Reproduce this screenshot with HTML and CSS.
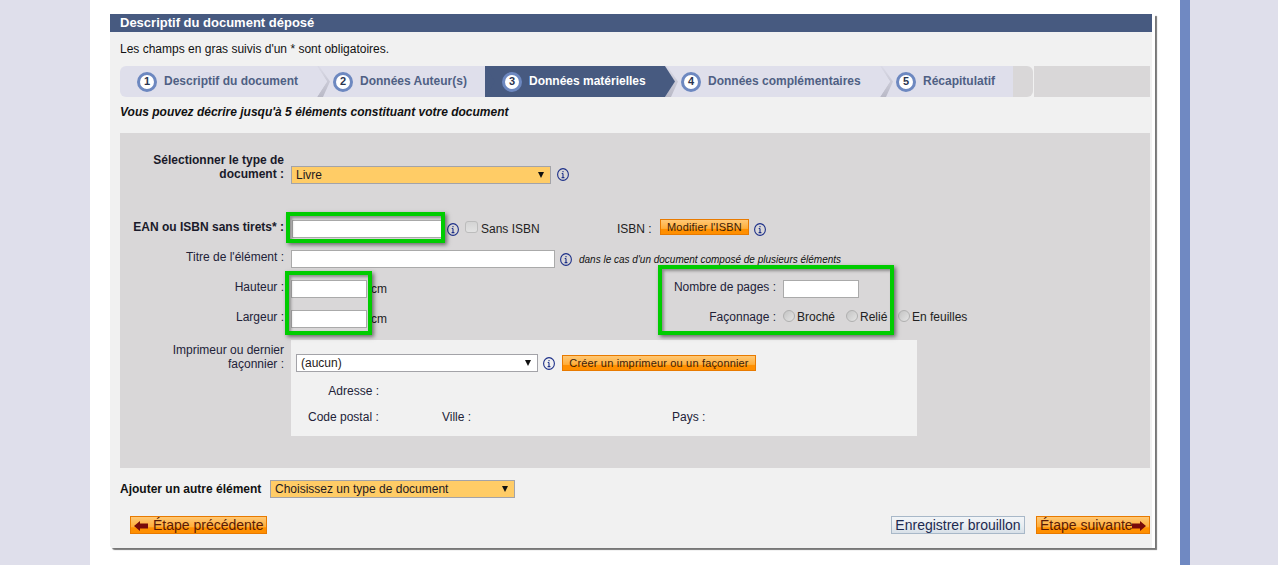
FILE: index.html
```html
<!DOCTYPE html>
<html lang="fr">
<head>
<meta charset="utf-8">
<title>Descriptif du document déposé</title>
<link rel="stylesheet" href="styles.css">
</head>
<body>
<div class="page">
  <div class="side-left"></div>
  <main class="main">
    <div class="card">
      <div class="inner">
        <h1 class="title">Descriptif du document déposé</h1>
        <p class="intro">Les champs en gras suivis d'un * sont obligatoires.</p>
        <div class="steps">
          <div class="step s1"><span class="num">1</span><span>Descriptif du document</span>
            <svg class="chev" width="14" height="31" viewBox="0 0 14 31"><defs><linearGradient id="shade" x1="0" y1="0" x2="0" y2="1"><stop offset="0" stop-color="#dbdbe7"/><stop offset="1" stop-color="#b9b9c6"/></linearGradient></defs><polygon fill="url(#shade)" points="0,31 10,15.5 0,0 2,0 13,15.5 6,31"/><polygon class="light" points="0,0 10,15.5 0,31"/></svg></div>
          <div class="step s2"><span class="num">2</span><span>Données Auteur(s)</span></div>
          <div class="step s3 active"><span class="num">3</span><span>Données matérielles</span>
            <svg class="chev" width="14" height="31" viewBox="0 0 14 31"><polygon fill="url(#shade)" points="0,31 10,15.5 0,0 2,0 13,15.5 6,31"/><polygon class="dark" points="0,0 10,15.5 0,31"/></svg></div>
          <div class="step s4"><span class="num">4</span><span>Données complémentaires</span>
            <svg class="chev" width="14" height="31" viewBox="0 0 14 31"><polygon fill="url(#shade)" points="0,31 10,15.5 0,0 2,0 13,15.5 6,31"/><polygon class="light" points="0,0 10,15.5 0,31"/></svg></div>
          <div class="step s5"><span class="num">5</span><span>Récapitulatif</span></div>
          <div class="cap"></div>
          <div class="rest"></div>
        </div>
        <p class="lead">Vous pouvez décrire jusqu'à 5 éléments constituant votre document</p>

        <div class="form">
          <div class="row r-type">
            <label class="lbl bold lbl-top">Sélectionner le type de document :</label>
            <span class="sel sel-type"><select class="orange"><option>Livre</option></select></span>
            <svg class="info" width="12" height="13" viewBox="0 0 12 13"><ellipse cx="6" cy="6.5" rx="5.4" ry="5.9"/><path d="M6 5.5v4M4.6 9.6h2.8M4.7 5.5H6M6 3v1.2"/></svg>
          </div>

          <div class="row r-ean">
            <label class="lbl bold">EAN ou ISBN sans tirets* :</label>
            <input class="txt w-ean" type="text">
            <svg class="info" width="12" height="13" viewBox="0 0 12 13"><ellipse cx="6" cy="6.5" rx="5.4" ry="5.9"/><path d="M6 5.5v4M4.6 9.6h2.8M4.7 5.5H6M6 3v1.2"/></svg>
            <input class="check" type="checkbox">
            <span class="sans">Sans ISBN</span>
            <span class="isbn">ISBN :</span>
            <button class="btn btn-small btn-isbn" type="button">Modifier l'ISBN</button>
            <svg class="info" width="12" height="13" viewBox="0 0 12 13"><ellipse cx="6" cy="6.5" rx="5.4" ry="5.9"/><path d="M6 5.5v4M4.6 9.6h2.8M4.7 5.5H6M6 3v1.2"/></svg>
          </div>

          <div class="row r-std">
            <label class="lbl">Titre de l'élément :</label>
            <input class="txt w-title" type="text">
            <svg class="info" width="12" height="13" viewBox="0 0 12 13"><ellipse cx="6" cy="6.5" rx="5.4" ry="5.9"/><path d="M6 5.5v4M4.6 9.6h2.8M4.7 5.5H6M6 3v1.2"/></svg>
            <em class="hint">dans le cas d'un document composé de plusieurs éléments</em>
          </div>

          <div class="row r-std">
            <label class="lbl">Hauteur :</label>
            <input class="txt w-dim" type="text">
            <span class="cm">cm</span>
            <label class="lbl lbl-right">Nombre de pages :</label>
            <input class="txt w-dim" type="text">
          </div>

          <div class="row r-std">
            <label class="lbl">Largeur :</label>
            <input class="txt w-dim" type="text">
            <span class="cm">cm</span>
            <label class="lbl lbl-right">Façonnage :</label>
            <span class="radios">
              <span class="radio-item r1"><input class="radio" type="radio" name="f">Broché</span>
              <span class="radio-item r2"><input class="radio" type="radio" name="f">Relié</span>
              <span class="radio-item"><input class="radio" type="radio" name="f">En feuilles</span>
            </span>
          </div>

          <div class="row r-print">
            <label class="lbl lbl-print">Imprimeur ou dernier façonnier :</label>
            <div class="printer">
              <div class="print-top">
                <span class="sel sel-print"><select class="white"><option>(aucun)</option></select></span>
                <svg class="info" width="12" height="13" viewBox="0 0 12 13"><ellipse cx="6" cy="6.5" rx="5.4" ry="5.9"/><path d="M6 5.5v4M4.6 9.6h2.8M4.7 5.5H6M6 3v1.2"/></svg>
                <button class="btn btn-small btn-create" type="button">Créer un imprimeur ou un façonnier</button>
              </div>
              <div class="addr">Adresse :</div>
              <div class="addr-row">
                <span class="cp">Code postal :</span>
                <span class="ville">Ville :</span>
                <span class="pays">Pays :</span>
              </div>
            </div>
          </div>

          <div class="mark mark-ean"></div>
          <div class="mark mark-dim"></div>
          <div class="mark mark-pages"></div>
        </div>

        <div class="add">
          <span class="add-lbl">Ajouter un autre élément</span>
          <span class="sel sel-add"><select class="orange"><option>Choisissez un type de document</option></select></span>
        </div>

        <div class="actions">
          <button class="btn btn-big btn-prev" type="button"><svg class="arr" width="14" height="10" viewBox="0 0 14 10"><polygon points="0,5 6,0 6,2.5 14,2.5 14,7.5 6,7.5 6,10"/></svg>Étape précédente</button>
          <button class="btn-draft" type="button">Enregistrer brouillon</button>
          <button class="btn btn-big btn-next" type="button">Étape suivante<svg class="arr" width="14" height="10" viewBox="0 0 14 10"><polygon points="14,5 8,0 8,2.5 0,2.5 0,7.5 8,7.5 8,10"/></svg></button>
        </div>
      </div>
    </div>
  </main>
  <div class="bar"></div>
  <div class="side-right"></div>
</div>
</body>
</html>
```

FILE: styles.css
```css
* { box-sizing: border-box; }
html, body { margin: 0; padding: 0; height: 100%; overflow: hidden; }
body { font-family: "Liberation Sans", Arial, sans-serif; font-size: 12px; color: #1a1a2a; background: #dfdfeb; }

.page { display: flex; height: 565px; }
.side-left { width: 90px; background: #dfdfeb; }
.main { width: 1090px; background: #fff; padding: 14px 0 0 20px; }
.bar { width: 10px; background: #7089c2; }
.side-right { flex: 1; background: #dfdfeb; }

.card { width: 1045px; height: 534px; background: #fff; box-shadow: 2px 2px 1px #777; border-bottom-left-radius: 3px; }
.inner { width: 1042px; height: 534px; background: #f1f1f1; padding-bottom: 0; border-bottom-left-radius: 3px; }

.title { margin: 0; height: 18px; padding-left: 10px; background: #475a80; color: #fff; font-size: 13px; font-weight: bold; line-height: 18px; }
.intro { margin: 0; padding: 10px 0 0 10px; height: 34px; line-height: 14px; color: #111; }

.steps { display: flex; height: 31px; margin-left: 10px; width: 1030px; font-weight: bold; color: #4f5f84; }
.step { position: relative; display: flex; align-items: center; height: 31px; background: #dfdfeb; line-height: 14px; padding-bottom: 1px; }
.step .num { display: flex; align-items: center; justify-content: center; width: 20px; height: 20px; margin-right: 7px; border: 3px solid #6d88c0; border-radius: 50%; background: #fff; color: #2a3550; font-size: 11px; font-weight: bold; line-height: 1; margin-top: 1px; }
.s1 { width: 197px; padding-left: 17px; border-radius: 6px 0 0 6px; }
.s2 { width: 168px; padding-left: 16px; }
.s3 { width: 180px; padding-left: 17px; }
.s4 { width: 215px; padding-left: 16px; }
.s5 { width: 133px; padding-left: 16px; }
.active { background: #475a80; color: #fff; }
.s2::after { content: ""; position: absolute; top: 0; right: -10px; width: 10px; height: 31px; background: #475a80; clip-path: polygon(0 0, 100% 0, 100% 100%, 0 100%, 100% 50%); z-index: 1; }
.chev { position: absolute; top: 0; left: 100%; z-index: 2; }
.light { fill: #dfdfeb; }
.dark { fill: #475a80; }
.cap { width: 20px; height: 31px; background: #d9d7d8; border-radius: 0 6px 6px 0; }
.rest { width: 116px; height: 31px; margin-left: 1px; background: #d9d7d8; }

.lead { margin: 0; padding: 8px 0 0 10px; height: 36px; line-height: 14px; font-weight: bold; font-style: italic; color: #111; }

.form { position: relative; margin-left: 10px; width: 1030px; height: 335px; padding-top: 20px; background: #d9d7d8; }
.row { display: flex; }
.lbl { width: 164px; margin-right: 7px; text-align: right; line-height: 14px; color: #222238; flex: none; }
.bold { font-weight: bold; color: #1a1a2a; }
.r-type { height: 31px; }
.r-type .sel { margin-top: 13px; }
.r-type .info { margin: 15px 0 0 6px; }
.r-ean { height: 18px; margin-top: 36px; align-items: center; }
.r-std { height: 18px; margin-top: 12px; align-items: center; }
.r-ean .lbl, .r-std .lbl { align-self: flex-start; }
.r-print { margin-top: 12px; }
.lbl-print { margin-top: 3px; }

.txt { height: 18px; padding: 1px 3px; border: 1px solid #aaa; background: #fff; flex: none; font: inherit; }
.w-ean { width: 150px; margin-left: 1px; }
.w-title { width: 264px; }
.w-dim { width: 76px; }
.w-dim + .cm { margin: 0 0 0 4px; width: 17px; color: #222; }
.lbl-right { width: 388px; margin-left: 0; }

.info { flex: none; fill: none; stroke: #1c2f88; stroke-width: 1.1; }
.r-ean .w-ean + .info { margin-left: 5px; }
.check { appearance: none; width: 13px; height: 12px; margin: -4px 3px 0 6px; border: 1px solid #bcbcbc; border-radius: 3px; background: linear-gradient(#d4d4d4, #e2e2e2); flex: none; }
.sans { width: 136px; margin-top: -1px; color: #222; }
.isbn { width: 43px; margin-top: -1px; color: #222; }
.r-ean .btn + .info { margin-left: 5px; }
.r-std .w-title + .info { margin-left: 5px; }
.hint { margin-left: 7px; font-size: 10px; color: #111; margin-top: 1px; white-space: nowrap; }

.radios { display: flex; align-self: flex-start; color: #222; }
.radio-item { display: flex; align-items: center; white-space: nowrap; line-height: 14px; }
.r1 { width: 63px; }
.r2 { width: 52px; }
.radio { appearance: none; width: 12px; height: 12px; margin: -2px 2px 0 0; border: 1px solid #b0b0b0; border-radius: 50%; background: linear-gradient(135deg, #c4c4c4, #e4e4e4); flex: none; }

.sel { position: relative; display: inline-block; flex: none; height: 18px; }
.sel::after { content: ""; position: absolute; top: 6px; right: 7px; border-style: solid; border-width: 6px 3px 0; border-color: #111 transparent transparent; }
.sel select { appearance: none; display: block; width: 100%; height: 18px; padding: 0 0 0 4px; border: 1px solid #a3a3a8; border-radius: 0; font: 12px "Liberation Sans", Arial, sans-serif; color: #1f1a20; }
.orange { background: #ffcc66; }
.white { background: #fff; }
.sel-type { width: 260px; }
.sel-print { width: 242px; }
.sel-add { width: 245px; }

.printer { width: 626px; height: 96px; padding: 14px 0 0 5px; background: #f1f1f1; color: #222238; }
.print-top { display: flex; align-items: center; height: 18px; }
.print-top .info { margin-left: 5px; }
.addr { margin: 12px 0 0; width: 83px; text-align: right; line-height: 14px; }
.addr-row { display: flex; margin-top: 12px; line-height: 14px; padding-left: 12px; }
.cp { width: 134px; }
.ville { width: 230px; }

.btn { border: 1px solid #e87a00; background: linear-gradient(#ffc875 0, #ffae3a 60%, #ff8f00 68%, #ff8f00 100%); color: #5a1a05; font-family: "Liberation Sans", Arial, sans-serif; padding: 0; cursor: pointer; }
.btn-small { width: 89px; height: 16px; font-size: 11px; line-height: 14px; letter-spacing: .17px; color: #3c2008; }
.btn-isbn { flex: none; margin-top: -4px; }
.btn-create { width: 194px; margin-left: 7px; }
.btn-big { display: flex; align-items: center; height: 18px; font-size: 14px; line-height: 16px; }
.btn-prev { width: 137px; padding-left: 3px; }
.btn-next { width: 114px; padding-left: 3px; }
.btn-prev .arr { margin-right: 5px; }
.btn-next .arr { margin-left: -1px; }
.arr { fill: #780a0a; flex: none; margin-top: 1px; }
.btn-draft { width: 134px; height: 18px; padding: 0; margin-left: auto; margin-right: 11px; border: 1px solid #a8b8c8; background: linear-gradient(#f2f5f8 0, #e8edf1 55%, #d8e0e8 100%); color: #1d2a50; font: 14px/16px "Liberation Sans", Arial, sans-serif; }

.add { display: flex; align-items: center; height: 18px; margin: 12px 0 0 10px; }
.add-lbl { width: 150px; font-weight: bold; color: #111; }

.actions { display: flex; width: 1020px; margin: 18px 0 0 20px; }

.mark { position: absolute; border: 4px solid #00cc00; box-shadow: 2px 2px 4px rgba(0, 0, 0, .5), inset 2px 2px 3px rgba(0, 0, 0, .35); pointer-events: none; }
.mark-ean { left: 166px; top: 79px; width: 159px; height: 31px; }
.mark-dim { left: 165px; top: 138px; width: 87px; height: 64px; }
.mark-pages { left: 538px; top: 132px; width: 236px; height: 70px; }
```
